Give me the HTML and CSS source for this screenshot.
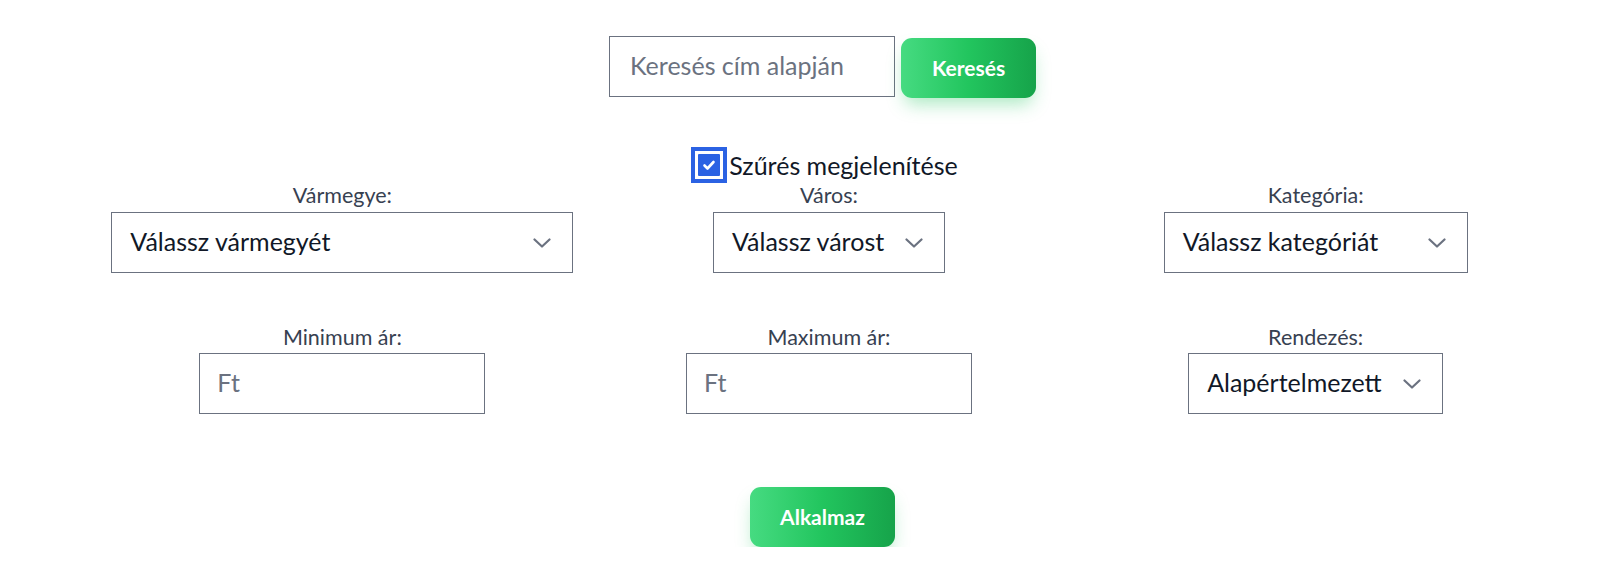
FILE: index.html
```html
<!DOCTYPE html>
<html lang="hu">
<head>
<meta charset="utf-8">
<title>Keresés</title>
<link rel="stylesheet" href="styles.css">
</head>
<body>
<div class="page">
  <form class="search-row">
    <input class="search-input" type="text" placeholder="Keresés cím alapján">
    <button class="btn btn-search" type="button">Keresés</button>
  </form>

  <label class="toggle-row">
    <span class="checkbox">
      <span class="checkbox-fill">
        <svg viewBox="0 0 16 16" width="16" height="16"><path d="M3.5 8.5l3 3 6-6.5" fill="none" stroke="#fff" stroke-width="2.6" stroke-linecap="round" stroke-linejoin="round"/></svg>
      </span>
    </span>
    <span class="toggle-text">Szűrés megjelenítése</span>
  </label>

  <div class="filters">
    <div class="field">
      <span class="field-label">Vármegye:</span>
      <div class="select w-county"><span>Válassz vármegyét</span><svg class="chev" viewBox="0 0 18 10" width="18" height="10"><path d="M1.5 1.5l7.5 7 7.5-7" fill="none" stroke="#6b7280" stroke-width="2.2" stroke-linecap="round" stroke-linejoin="round"/></svg></div>
    </div>
    <div class="field">
      <span class="field-label">Város:</span>
      <div class="select w-city"><span>Válassz várost</span><svg class="chev" viewBox="0 0 18 10" width="18" height="10"><path d="M1.5 1.5l7.5 7 7.5-7" fill="none" stroke="#6b7280" stroke-width="2.2" stroke-linecap="round" stroke-linejoin="round"/></svg></div>
    </div>
    <div class="field">
      <span class="field-label">Kategória:</span>
      <div class="select w-cat"><span>Válassz kategóriát</span><svg class="chev" viewBox="0 0 18 10" width="18" height="10"><path d="M1.5 1.5l7.5 7 7.5-7" fill="none" stroke="#6b7280" stroke-width="2.2" stroke-linecap="round" stroke-linejoin="round"/></svg></div>
    </div>
    <div class="field row2">
      <span class="field-label">Minimum ár:</span>
      <input class="price-input" type="text" placeholder="Ft">
    </div>
    <div class="field row2">
      <span class="field-label">Maximum ár:</span>
      <input class="price-input" type="text" placeholder="Ft">
    </div>
    <div class="field row2">
      <span class="field-label">Rendezés:</span>
      <div class="select w-sort"><span>Alapértelmezett</span><svg class="chev" viewBox="0 0 18 10" width="18" height="10"><path d="M1.5 1.5l7.5 7 7.5-7" fill="none" stroke="#6b7280" stroke-width="2.2" stroke-linecap="round" stroke-linejoin="round"/></svg></div>
    </div>
  </div>

  <div class="apply-row">
    <button class="btn btn-apply" type="button">Alkalmaz</button>
  </div>
</div>
</body>
</html>
```

FILE: styles.css
```css
* { box-sizing: border-box; }

body {
  margin: 0;
  background: #ffffff;
  font-family: Lato, "Noto Sans", "Liberation Sans", sans-serif;
  color: #111827;
}

.page {
  padding: 36px 0 0 44px;
}

.search-row {
  display: flex;
  justify-content: center;
  align-items: flex-start;
  gap: 6px;
  margin: 0;
}

.search-input {
  width: 286px;
  height: 61px;
  border: 1px solid #6b7280;
  border-radius: 0;
  padding: 0 20px 3px;
  font-family: inherit;
  font-size: 25px;
  color: #111827;
  outline: none;
}

.search-input::placeholder,
.price-input::placeholder {
  color: #6b7280;
}

.btn {
  border: none;
  border-radius: 11px;
  background: linear-gradient(to right, #46db81 0%, #22c55e 50%, #16a34a 100%);
  color: #ffffff;
  font-family: inherit;
  font-weight: 700;
  font-size: 21px;
  padding: 0 0 2px;
  box-shadow: 0 10px 18px -4px rgba(34, 197, 94, 0.38);
  cursor: pointer;
}

.btn-search {
  width: 135px;
  height: 60px;
  margin-top: 2px;
}

.toggle-row {
  display: flex;
  justify-content: center;
  align-items: center;
  margin-top: 49px;
  height: 36px;
  cursor: pointer;
}

.checkbox {
  width: 36px;
  height: 36px;
  border: 4px solid #2b62e3;
  padding: 3px;
  margin: 0 2px 0 4px;
  background: #ffffff;
  display: flex;
}

.checkbox-fill {
  flex: 1;
  background: #2b62e3;
  border-radius: 1px;
  display: flex;
  align-items: center;
  justify-content: center;
}

.toggle-text {
  font-size: 25px;
  color: #111827;
  line-height: 30px;
}

.filters {
  display: grid;
  grid-template-columns: repeat(3, 1fr);
  width: 1460px;
  margin-left: 55px;
  row-gap: 52px;
}

.field {
  display: flex;
  flex-direction: column;
  align-items: center;
}

.field-label {
  font-size: 21.5px;
  line-height: 24px;
  color: #374151;
  margin-bottom: 5px;
}

.row2 .field-label {
  margin-bottom: 4px;
}

.select {
  height: 61px;
  border: 1px solid #6b7280;
  display: flex;
  align-items: center;
  justify-content: space-between;
  padding: 0 21px 3px 18px;
  font-size: 25px;
  color: #111827;
}

.chev { flex: none; margin-top: 3px; }

.w-county { width: 462px; }
.w-city { width: 232px; }
.w-cat { width: 304px; }
.w-sort { width: 255px; }

.price-input {
  width: 286px;
  height: 61px;
  border: 1px solid #6b7280;
  border-radius: 0;
  padding: 0 17px 4px;
  font-family: inherit;
  font-size: 25px;
  color: #111827;
  outline: none;
}

.apply-row {
  display: flex;
  justify-content: center;
  margin-top: 73px;
}

.btn-apply {
  width: 145px;
  height: 60px;
}
```
